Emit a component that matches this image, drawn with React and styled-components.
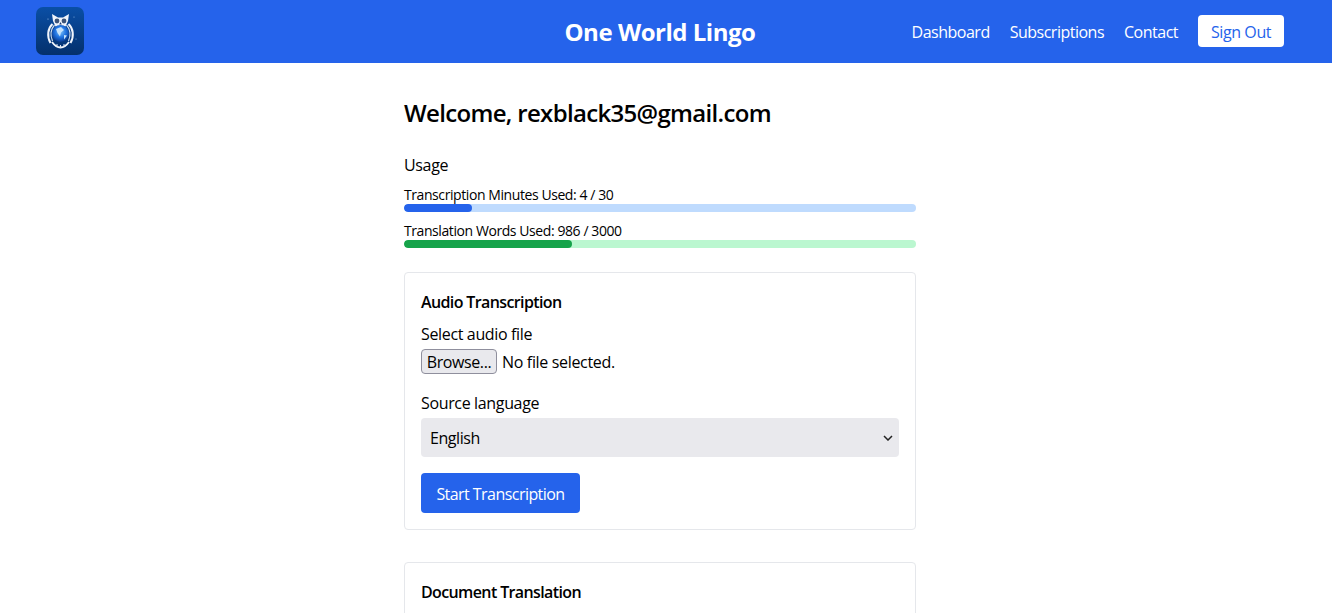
import React from 'react';
import styled, { createGlobalStyle } from 'styled-components';

const GlobalStyle = createGlobalStyle`
    html, body {
        margin: 0;
        height: 100%;
        overflow: hidden;
        background: #fff;
    }
    body {
        font-family: "Open Sans", "Noto Sans", sans-serif;
        color: #000;
    }
    * {
        box-sizing: border-box;
    }
`;

const Header = styled.header`
    display: grid;
    grid-template-columns: 1fr auto 1fr;
    align-items: center;
    height: 63px;
    padding: 0 48px 1px 36px;
    background: #2563eb;
    color: #fff;
`;
const Logo = styled.svg`
    display: block;
    width: 48px;
    height: 48px;
`;
const Title = styled.div`
    padding-top: 2px;
    font-size: 24px;
    line-height: 32px;
    font-weight: 700;
    letter-spacing: -0.47px;
`;
const Nav = styled.nav`
    display: flex;
    align-items: center;
    justify-content: flex-end;
    gap: 20px;
`;
const NavLink = styled.a`
    padding-top: 2px;
    font-size: 16px;
    line-height: 24px;
    letter-spacing: -0.5px;
    color: #fff;
`;
const SignOut = styled.button`
    width: 86px;
    height: 32px;
    padding: 2px 0 0;
    border: 0;
    border-radius: 4px;
    background: #fff;
    color: #2563eb;
    font: inherit;
    font-size: 16px;
    letter-spacing: -0.4px;
`;
const Main = styled.main`
    width: 512px;
    margin-left: 404px;
    padding-top: 32px;
`;
const Welcome = styled.h1`
    margin: 0 0 22px;
    font-size: 24px;
    line-height: 36px;
    font-weight: 600;
    letter-spacing: -0.67px;
`;
const UsageTitle = styled.div`
    margin-bottom: 10px;
    font-size: 16px;
    line-height: 24px;
    letter-spacing: -0.35px;
`;
const Meter = styled.div`
    margin-bottom: 11px;
`;
const MeterLabel = styled.div`
    margin-bottom: 1px;
    font-size: 14px;
    line-height: 16px;
    letter-spacing: -0.42px;
`;
const Track = styled.div`
    height: 8px;
    border-radius: 4px;
    background: ${props => props.$track};
    overflow: hidden;
`;
const Fill = styled.div`
    height: 100%;
    border-radius: 4px;
    background: ${props => props.$fill};
`;
const Card = styled.section`
    margin-top: ${props => props.$top}px;
    padding: 16px;
    border: 1px solid #e5e7eb;
    border-radius: 4px;
    min-height: ${props => props.$min || 0}px;
`;
const CardTitle = styled.h2`
    margin: 0 0 7px;
    font-size: 16px;
    line-height: 26px;
    font-weight: 600;
    letter-spacing: -0.62px;
`;
const Label = styled.label`
    display: block;
    margin-bottom: 3px;
    font-size: 16px;
    line-height: 24px;
    letter-spacing: -0.35px;
`;
const FileRow = styled.div`
    display: flex;
    align-items: center;
    gap: 5px;
    height: 25px;
    margin-bottom: 17px;
    font-size: 16px;
    letter-spacing: -0.33px;
`;
const BrowseButton = styled.button`
    width: 76px;
    height: 25px;
    padding: 0;
    border: 1px solid #8f8f9d;
    border-radius: 4px;
    background: #e9e9ed;
    color: #000;
    font: inherit;
    letter-spacing: -0.4px;
`;
const SelectWrap = styled.div`
    position: relative;
    margin-bottom: 16px;
`;
const Select = styled.select`
    display: block;
    width: 100%;
    height: 39px;
    padding: 0 9px;
    border: 0;
    border-radius: 4px;
    appearance: none;
    background: #e9e9ed;
    color: #000;
    font: inherit;
    font-size: 16px;
    letter-spacing: -0.45px;
`;
const Chevron = styled.svg`
    position: absolute;
    top: 17px;
    right: 6px;
    width: 10px;
    height: 6px;
    pointer-events: none;
`;
const StartButton = styled.button`
    display: block;
    width: 159px;
    height: 40px;
    padding: 2px 0 0;
    border: 0;
    border-radius: 4px;
    background: #2563eb;
    color: #fff;
    font: inherit;
    font-size: 16px;
    letter-spacing: -0.55px;
`;

const OwlLogo = () => (
    <Logo viewBox="0 0 48 48">
        <defs>
            <linearGradient id="tile" x1="0" y1="0" x2="0" y2="1">
                <stop offset="0" stopColor="#0a4fa6" />
                <stop offset="1" stopColor="#04306c" />
            </linearGradient>
            <radialGradient id="globe" cx="0.5" cy="0.4" r="0.6">
                <stop offset="0" stopColor="#7cc0f8" />
                <stop offset="0.55" stopColor="#1f72e0" />
                <stop offset="1" stopColor="#0a3a90" />
            </radialGradient>
        </defs>
        <rect width="48" height="48" rx="7" fill="url(#tile)" />
        <circle cx="12" cy="12" r="0.6" fill="#9cc4ee" />
        <circle cx="38" cy="10" r="0.5" fill="#9cc4ee" />
        <circle cx="40" cy="32" r="0.5" fill="#9cc4ee" />
        <path d="M16 7l6 3.5h5L33 7l-1 7-2.500 5.500h-10L17 14z" fill="#f0f4fb" />
        <circle cx="21" cy="14" r="2.400" fill="#3b5379" />
        <circle cx="28" cy="14" r="2.400" fill="#3b5379" />
        <path d="M24.500 15l-1.300 2.500h2.600z" fill="#1b3a70" />
        <path d="M16.500 17c-4.500 4-6 12-2 19M32.500 17c4.500 4 6 12 2 19" fill="none" stroke="#f0f4fb" strokeWidth="2" />
        <path d="M18.500 18c-3.500 4-4.500 10-2 16M30.500 18c3.500 4 4.500 10 2 16" fill="none" stroke="#d2dff0" strokeWidth="1.200" />
        <circle cx="24.500" cy="26.500" r="8.500" fill="url(#globe)" />
        <path d="M20 22l5-2 3 3-3 2.500-1 4-2.500-3.500zM28 28l3 .5-3 4z" fill="#c6e2fb" />
        <path d="M16 35c2.500 3.500 6 5.500 8.500 5.500s6-2 8.500-5.500" fill="none" stroke="#f4f7fc" strokeWidth="1.800" />
        <path d="M21 37v3M24.500 38v3M28 37v3" stroke="#dfe8f5" strokeWidth="1" />
    </Logo>
);

export default function App() {
    return (
        <>
            <GlobalStyle />
            <Header>
                <OwlLogo />
                <Title>One World Lingo</Title>
                <Nav>
                    <NavLink>Dashboard</NavLink>
                    <NavLink>Subscriptions</NavLink>
                    <NavLink>Contact</NavLink>
                    <SignOut>Sign Out</SignOut>
                </Nav>
            </Header>
            <Main>
                <Welcome>Welcome, rexblack35@gmail.com</Welcome>
                <UsageTitle>Usage</UsageTitle>
                <Meter>
                    <MeterLabel>Transcription Minutes Used: 4 / 30</MeterLabel>
                    <Track $track="#bfdbfe"><Fill $fill="#2563eb" style={{ width: `${(4 / 30) * 100}%` }} /></Track>
                </Meter>
                <Meter>
                    <MeterLabel>Translation Words Used: 986 / 3000</MeterLabel>
                    <Track $track="#bbf7d0"><Fill $fill="#16a34a" style={{ width: `${(986 / 3000) * 100}%` }} /></Track>
                </Meter>
                <Card $top={24}>
                    <CardTitle>Audio Transcription</CardTitle>
                    <Label>Select audio file</Label>
                    <FileRow>
                        <BrowseButton>Browse...</BrowseButton>
                        <span>No file selected.</span>
                    </FileRow>
                    <Label>Source language</Label>
                    <SelectWrap>
                        <Select defaultValue="en">
                            <option value="en">English</option>
                        </Select>
                        <Chevron viewBox="0 0 10 6">
                            <path d="M1 1l4 4 4-4" fill="none" stroke="#222" strokeWidth="1.500" />
                        </Chevron>
                    </SelectWrap>
                    <StartButton>Start Transcription</StartButton>
                </Card>
                <Card $top={32} $min={200}>
                    <CardTitle>Document Translation</CardTitle>
                </Card>
            </Main>
        </>
    );
}
